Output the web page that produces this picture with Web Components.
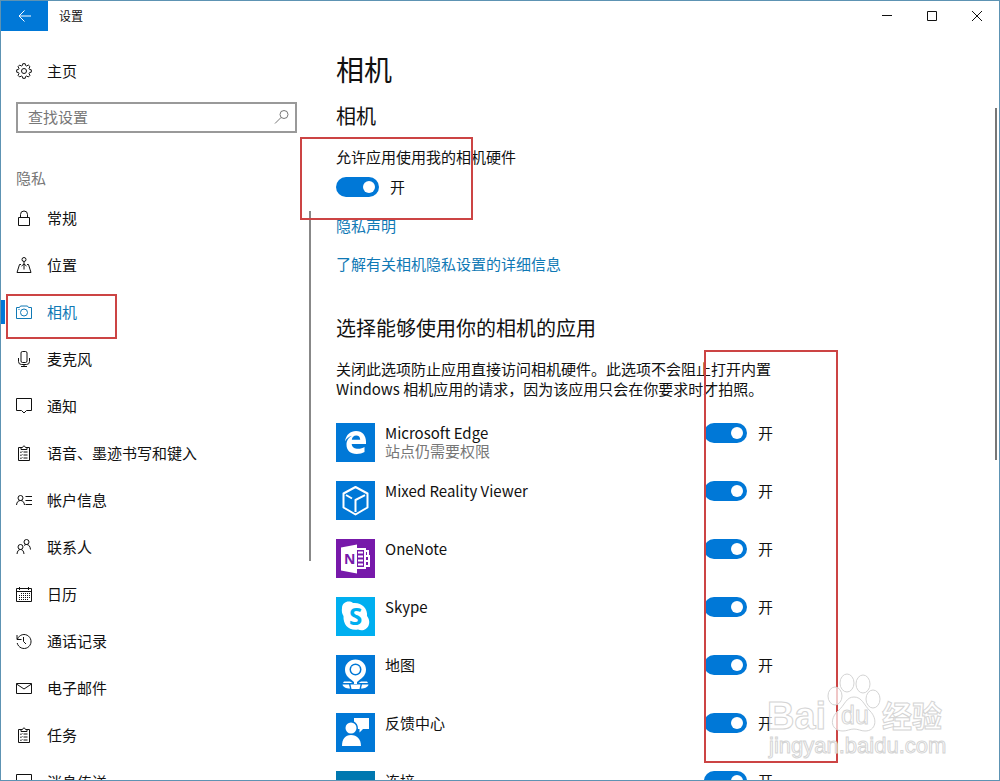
<!DOCTYPE html>
<html lang="zh-CN">
<head>
<meta charset="utf-8">
<meta name="viewport" content="width=device-width, initial-scale=1">
<title>设置</title>
<style>
  body {
    margin: 0;
    font-family: "Noto Sans CJK SC", "Noto Sans", sans-serif;
    font-size: 15px;
    line-height: 20px;
    color: #111;
    background: #fff;
  }
</style>
</head>
<body>
<settings-window>
  <title-bar slot="title">设置</title-bar>
  <settings-sidebar slot="sidebar" heading="隐私">
    <nav-item slot="home" icon="gear">主页</nav-item>
    <nav-item icon="lock">常规</nav-item>
    <nav-item icon="location">位置</nav-item>
    <nav-item icon="camera" active>相机</nav-item>
    <nav-item icon="mic">麦克风</nav-item>
    <nav-item icon="message">通知</nav-item>
    <nav-item icon="clipboard">语音、墨迹书写和键入</nav-item>
    <nav-item icon="account">帐户信息</nav-item>
    <nav-item icon="people">联系人</nav-item>
    <nav-item icon="calendar">日历</nav-item>
    <nav-item icon="history">通话记录</nav-item>
    <nav-item icon="mail">电子邮件</nav-item>
    <nav-item icon="clipboard">任务</nav-item>
    <nav-item icon="message">消息传送</nav-item>
  </settings-sidebar>
  <camera-page>
    <app-row icon="edge" name="Microsoft Edge">站点仍需要权限</app-row>
    <app-row icon="viewer" name="Mixed Reality Viewer"></app-row>
    <app-row icon="onenote" name="OneNote"></app-row>
    <app-row icon="skype" name="Skype"></app-row>
    <app-row icon="maps" name="地图"></app-row>
    <app-row icon="feedback" name="反馈中心"></app-row>
    <app-row icon="connect" name="连接"></app-row>
  </camera-page>
  <highlight-box slot="overlay" style="left: 299px; top: 136px; width: 173px; height: 83px"></highlight-box>
  <highlight-box slot="overlay" style="left: 5px; top: 293px; width: 111px; height: 45px"></highlight-box>
  <highlight-box slot="overlay" style="left: 703px; top: 349px; width: 134px; height: 413px"></highlight-box>
  <site-watermark slot="overlay"></site-watermark>
</settings-window>

<script>
const ICONS = {
  gear: '<circle cx="8" cy="8" r="2.5"/><path d="M6.8.7h2.4l.4 1.8 1.1.5 1.6-1L14 3.700l-1 1.600.5 1.100 1.800.4v2.400l-1.800.4-.5 1.100 1 1.600-1.700 1.700-1.600-1-1.100.5-.4 1.800H6.800l-.4-1.800-1.100-.5-1.600 1L2 12.300l1-1.600-.5-1.100-1.800-.4V6.800l1.800-.4L3 5.300 2 3.700 3.700 2l1.600 1 1.100-.5z"/>',
  lock: '<path d="M2.500 7.500h11v8h-11zM4.500 7.500V4.500a3.500 3.500 0 0 1 7 0v3"/>',
  location: '<circle cx="8" cy="2.500" r="2"/><path d="M8 4.500v8M5 7.500H3.500L1 15.500h14l-2.500-8H11M5.500 9L8 7l2.500 2"/>',
  camera: '<path d="M.5 3.500h3l1-1.500h7l1 1.500h3v11H.5z"/><circle cx="8" cy="8.500" r="3.500"/><path d="M2.500 5.500h1"/>',
  mic: '<rect x="5" y=".5" width="6" height="11" rx="1.500"/><path d="M2.500 7v3.500q0 3 3 3h5q3 0 3-3V7M8 13.500v2M5 15.500h6"/>',
  message: '<path d="M.5.5h15v12h-5L8 15l-2.500-2.500h-5z"/>',
  clipboard: '<path d="M5 2.500H2.500v13h11v-13H11M5 4.500v-2h1.500Q8-.8 9.500 2.500H11v2z"/><path d="M7.500 7h4M7.500 10h4M7.500 13h4M4.300 7l.7.700L6.300 6.300M4.300 10l.7.700 1.300-1.400M4.300 13l.7.700 1.300-1.400"/>',
  account: '<circle cx="4.500" cy="6" r="2.500"/><path d="M.5 13q.5-4.500 4-4.500t4 4.500M9.500 4.500H16M9.500 8.500H16M9.500 12.500H16"/>',
  people: '<circle cx="4.500" cy="8" r="2.500"/><path d="M1 15q.5-4.500 3.500-4.500T8 15"/><circle cx="10.500" cy="3" r="2.500"/><path d="M8 6.500q1-1 2.500-1 3.500 0 4 5"/>',
  calendar: '<path d="M.5 2.500h15v13H.5zM.5 5.500h15M3.500 1v3M12.500 1v3"/><path stroke-dasharray="1 1" d="M3.500 9v5M5.500 7v7M7.500 7v7M9.500 7v7M11.500 7v7M13.500 7v5"/>',
  history: '<path d="M1.500 6A7 7 0 1 1 1.200 10M1 2v4.500h4.500M7.500 4v4.500L10 11"/>',
  mail: '<path d="M.5 3.500h15v10H.5zM.5 4l7.500 5 7.500-5"/>',
  search: '<circle cx="10" cy="5.500" r="4"/><path d="M7 8.500l-6 6"/>',
  back: '<path d="M2 8h12M7.500 2.500L2 8l5.500 5.500"/>',
  minimize: '<path d="M3 7.500h10"/>',
  maximize: '<path d="M3.500 3.500h9v9h-9z"/>',
  close: '<path d="M3 3l10 10M13 3L3 13"/>'
};

const TILES = {
  edge: ['#0078d7', '<path fill="#fff" d="M9 18.500C10 11.500 14.500 8 20 8c6.500 0 10 4.700 10 10.500V21H15.700c.2 3.500 3.300 4.800 6.300 4.800 2.600 0 4.800-.8 6.500-1.800v5c-2 1.200-4.800 2-7.800 2-6.500 0-10.200-4-10.200-9.300 0-4.200 2.300-7.300 5.600-8.900-3.300.5-5.400 2.700-7.100 5.700zm6.800-1.700h8.400c0-2.700-1.500-4.200-4-4.200-2.400 0-4.100 1.600-4.400 4.200z"/>'],
  viewer: ['#0078d7', '<g fill="none" stroke="#fff" stroke-width="2" stroke-linejoin="round"><path d="M19.500 6L31.500 12.500V26.500L19.500 33.500L7.500 26.500V12.500z"/><path d="M10 14l6 3.500M29 14.200L19.500 19v12"/></g>'],
  onenote: ['#7719aa', '<path fill="#fff" d="M5 8.500L21 5.500v29L5 31.500z"/><path fill="none" stroke="#fff" stroke-width="2" d="M21 10h8v19h-8M29 12h3v5h-3M29 17h4v5h-4M29 22h4v5h-4M22 13.500h5M22 17.500h5M22 21.500h5M22 25.500h5"/><text x="8" y="25" font-family="Open Sans, sans-serif" font-size="14" font-weight="700" fill="#7719aa">N</text>'],
  skype: ['#00aff0', '<path fill="#fff" d="M6 11C6 5 13 3 17 6c8-1 15 5 14 13 6 8-1 17-9 13.500C13 34 7 28 7.500 19 6 17 5.500 14 6 11z"/><text x="19.500" y="28" text-anchor="middle" font-family="Open Sans, sans-serif" font-size="24" font-weight="700" fill="#00aff0">S</text>'],
  maps: ['#0078d7', '<path fill="#fff" fill-rule="evenodd" d="M19.500 4.500c-6 0-10.500 4.500-10.500 10 0 5 3 8 6 10l3 2.500v2h3v-2l3-2.500c3-2 6-5 6-10 0-5.500-4.500-10-10.500-10zm0 4a6 6 0 1 1 0 12 6 6 0 0 1 0-12z"/><circle cx="19.500" cy="14.500" r="4.500" fill="#fff"/><path fill="#fff" d="M8 26.500h6l2.500 1.500H7zM6.500 29.500h6.500l1 4c-4 0-7-1.500-7.500-4zM14.500 29.500h10l-1 4.500h-8zM25 26.500h6l1 1.500h-9.500zM26 29.500h6.500c-.5 2.500-3.500 4-7.500 4z"/>'],
  feedback: ['#0078d7', '<circle cx="15" cy="15" r="5.500" fill="#fff"/><path fill="#fff" d="M6 33c0-7 3-11 9-11s10 4 10 11zM18 5h15v11h-6l-3.500 3.500V16H22c0-4-1.500-6-4-7.500z"/>'],
  connect: ['#0078b0', '<path fill="none" stroke="#fff" stroke-width="2" d="M7 12h25v16H7z"/>']
};

class UiIcon extends HTMLElement {
  connectedCallback() {
    this.attachShadow({ mode: 'open' });
    this.shadowRoot.innerHTML = `
      <style>
        :host {
          display: block;
          width: 16px;
          height: 16px;
          flex: none;
        }
        svg {
          display: block;
          width: 100%;
          height: 100%;
          overflow: visible;
        }
      </style>
      <svg viewBox="0 0 16 16" fill="none" stroke="currentColor" aria-hidden="true">${ICONS[this.getAttribute('name')]}</svg>
    `;
  }
}
customElements.define('ui-icon', UiIcon);

class TitleBar extends HTMLElement {
  connectedCallback() {
    this.attachShadow({ mode: 'open' });
    this.shadowRoot.innerHTML = `
      <style>
        :host {
          display: flex;
          height: 30px;
          font-size: 12px;
        }
        button {
          display: grid;
          place-items: center;
          width: 45px;
          padding: 0;
          border: 0;
          background: none;
          color: #111;
        }
        .back {
          width: 47px;
          background: #0078d7;
          color: #fff;
        }
        .title {
          flex: 1;
          padding-left: 11px;
          line-height: 30px;
        }
      </style>
      <button class="back" aria-label="返回"><ui-icon name="back"></ui-icon></button>
      <span class="title"><slot></slot></span>
      <button aria-label="最小化"><ui-icon name="minimize"></ui-icon></button>
      <button aria-label="最大化"><ui-icon name="maximize"></ui-icon></button>
      <button aria-label="关闭"><ui-icon name="close"></ui-icon></button>
    `;
  }
}
customElements.define('title-bar', TitleBar);

class NavItem extends HTMLElement {
  connectedCallback() {
    this.attachShadow({ mode: 'open' });
    this.shadowRoot.innerHTML = `
      <style>
        :host {
          display: block;
        }
        a {
          display: flex;
          align-items: center;
          height: 47px;
          color: inherit;
          text-decoration: none;
          white-space: nowrap;
        }
        a::before {
          content: "";
          width: 4px;
          height: 24px;
        }
        ui-icon {
          margin: 0 15px 0 11px;
        }
        :host([active]) a {
          color: #1079b5;
        }
        :host([active]) a::before {
          background: #0078d7;
        }
      </style>
      <a href="#"><ui-icon name="${this.getAttribute('icon')}"></ui-icon><slot></slot></a>
    `;
  }
}
customElements.define('nav-item', NavItem);

class SettingsSidebar extends HTMLElement {
  connectedCallback() {
    this.attachShadow({ mode: 'open' });
    this.shadowRoot.innerHTML = `
      <style>
        :host {
          display: grid;
          grid-template-columns: 1fr 2px;
          padding-top: 16px;
        }
        .search {
          display: flex;
          align-items: center;
          height: 31px;
          box-sizing: border-box;
          margin: 8px 12px 35px 15px;
          padding: 0 5px 2px 10px;
          border: 2px solid #999;
          color: #777;
        }
        input {
          flex: 1;
          min-width: 0;
          padding: 0;
          border: 0;
          outline: 0;
          background: none;
          font: inherit;
        }
        input::placeholder {
          color: #777;
          opacity: 1;
        }
        h2 {
          margin: 0 0 6px 15px;
          font-size: 15px;
          font-weight: 400;
          color: #777;
        }
        .thumb {
          height: 350px;
          margin-top: 164px;
          background: #888;
        }
      </style>
      <nav>
        <slot name="home"></slot>
        <label class="search">
          <input type="text" placeholder="查找设置" aria-label="查找设置">
          <ui-icon name="search"></ui-icon>
        </label>
        <h2>${this.getAttribute('heading')}</h2>
        <slot></slot>
      </nav>
      <div class="thumb"></div>
    `;
  }
}
customElements.define('settings-sidebar', SettingsSidebar);

class ToggleSwitch extends HTMLElement {
  connectedCallback() {
    this.attachShadow({ mode: 'open' });
    this.shadowRoot.innerHTML = `
      <style>
        :host {
          display: block;
        }
        label {
          display: flex;
          align-items: center;
          gap: 11px;
        }
        input {
          appearance: none;
          display: flex;
          align-items: center;
          justify-content: flex-end;
          box-sizing: border-box;
          width: 43px;
          height: 20px;
          margin: 0;
          padding: 0 4px;
          border-radius: 10px;
          background: #0078d7;
        }
        input::before {
          content: "";
          width: 12px;
          height: 12px;
          border-radius: 50%;
          background: #fff;
        }
        input:not(:checked) {
          justify-content: flex-start;
          background: #999;
        }
      </style>
      <label>
        <input type="checkbox" role="switch" aria-label="${this.getAttribute('label')}" checked>
        <span>开</span>
      </label>
    `;
    const input = this.shadowRoot.querySelector('input');
    const state = this.shadowRoot.querySelector('span');
    input.addEventListener('change', () => {
      state.textContent = input.checked ? '开' : '关';
    });
  }
}
customElements.define('toggle-switch', ToggleSwitch);

class AppRow extends HTMLElement {
  connectedCallback() {
    const [color, art] = TILES[this.getAttribute('icon')];
    const name = this.getAttribute('name');
    this.attachShadow({ mode: 'open' });
    this.shadowRoot.innerHTML = `
      <style>
        :host {
          display: grid;
          grid-template-columns: 39px 1fr auto;
          column-gap: 10px;
          align-items: start;
        }
        svg {
          display: block;
          width: 39px;
          height: 39px;
        }
        .text {
          display: grid;
          height: 39px;
          align-content: start;
        }
        .note {
          color: #777;
          line-height: 16px;
        }
      </style>
      <svg viewBox="0 0 39 39" style="background: ${color}" aria-hidden="true">${art}</svg>
      <div class="text">
        <span>${name}</span>
        <span class="note"><slot></slot></span>
      </div>
      <toggle-switch label="${name}"></toggle-switch>
    `;
  }
}
customElements.define('app-row', AppRow);

class CameraPage extends HTMLElement {
  connectedCallback() {
    this.attachShadow({ mode: 'open' });
    this.shadowRoot.innerHTML = `
      <style>
        :host {
          display: grid;
          grid-template-columns: minmax(0, 1fr) 2px;
          padding: 0 2px 0 25px;
        }
        main {
          max-width: 437px;
          padding-top: 18px;
        }
        h1, h2, p {
          margin: 0;
          font-weight: 400;
        }
        h1 {
          font-size: 28px;
          line-height: 40px;
        }
        h2 {
          font-size: 20px;
          line-height: 28px;
        }
        h1 + h2 {
          margin: 13px 0 17px;
        }
        .access {
          margin: 10px 0 19px;
        }
        .links {
          display: grid;
          justify-items: start;
          gap: 18px;
          margin-bottom: 40px;
        }
        a {
          color: #1079b5;
          text-decoration: none;
        }
        .about {
          margin: 17px 0 24px;
        }
        .apps {
          display: grid;
          gap: 19px;
        }
        .thumb {
          height: 352px;
          margin-top: 77px;
          background: #777;
        }
      </style>
      <main>
        <h1>相机</h1>
        <h2>相机</h2>
        <p>允许应用使用我的相机硬件</p>
        <toggle-switch class="access" label="允许应用使用我的相机硬件"></toggle-switch>
        <div class="links">
          <a href="#">隐私声明</a>
          <a href="#">了解有关相机隐私设置的详细信息</a>
        </div>
        <h2>选择能够使用你的相机的应用</h2>
        <p class="about">关闭此选项防止应用直接访问相机硬件。此选项不会阻止打开内置 Windows 相机应用的请求，因为该应用只会在你要求时才拍照。</p>
        <div class="apps"><slot></slot></div>
      </main>
      <div class="thumb"></div>
    `;
  }
}
customElements.define('camera-page', CameraPage);

class HighlightBox extends HTMLElement {
  connectedCallback() {
    this.attachShadow({ mode: 'open' });
    this.shadowRoot.innerHTML = `
      <style>
        :host {
          position: absolute;
          box-sizing: border-box;
          border: 2px solid #cc4444;
          pointer-events: none;
        }
      </style>
    `;
  }
}
customElements.define('highlight-box', HighlightBox);

class SiteWatermark extends HTMLElement {
  connectedCallback() {
    this.attachShadow({ mode: 'open' });
    this.shadowRoot.innerHTML = `
      <style>
        :host {
          position: absolute;
          right: 50px;
          bottom: 18px;
          pointer-events: none;
        }
        svg {
          display: block;
          width: 184px;
          height: 92px;
        }
        text {
          font-family: "Liberation Sans", "Noto Sans CJK SC", sans-serif;
        }
      </style>
      <svg viewBox="0 0 184 92" fill="#fff" fill-opacity=".7" stroke="#d4d4d4">
        <ellipse cx="70" cy="26" rx="7" ry="9"/>
        <ellipse cx="82" cy="13" rx="7" ry="9"/>
        <ellipse cx="98" cy="14" rx="7" ry="9"/>
        <ellipse cx="108" cy="29" rx="7" ry="9"/>
        <path d="M89 27c8 0 10 8 16 14 8 8 6 20-5 20-4 0-7-2-11-2s-7 2-11 2c-12 0-14-12-5-20 7-6 8-14 16-14z"/>
        <text x="2" y="59" font-size="38" font-weight="700">Bai</text>
        <text x="76" y="54" font-size="25">du</text>
        <text x="117" y="57" font-size="30" font-weight="700">经验</text>
        <text x="4" y="83" font-size="22">jingyan.baidu.com</text>
      </svg>
    `;
  }
}
customElements.define('site-watermark', SiteWatermark);

class SettingsWindow extends HTMLElement {
  connectedCallback() {
    this.attachShadow({ mode: 'open' });
    this.shadowRoot.innerHTML = `
      <style>
        :host {
          display: grid;
          grid-template-rows: auto minmax(0, 1fr);
          position: relative;
          height: 100vh;
          box-sizing: border-box;
          border: 1px solid #5d93b3;
          overflow: hidden;
        }
        .body {
          display: grid;
          grid-template-columns: 310px minmax(0, 1fr);
          overflow: hidden;
        }
      </style>
      <slot name="title"></slot>
      <div class="body">
        <slot name="sidebar"></slot>
        <slot></slot>
      </div>
      <slot name="overlay"></slot>
    `;
  }
}
customElements.define('settings-window', SettingsWindow);
</script>
</body>
</html>
